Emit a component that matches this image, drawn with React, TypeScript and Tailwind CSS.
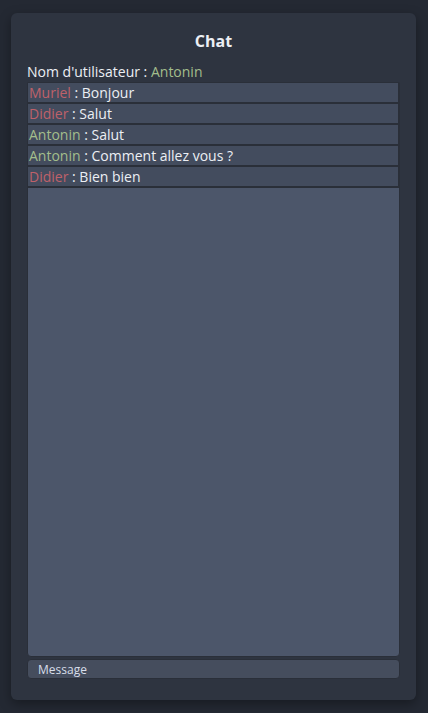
import React from 'react';

interface Message {
  id: number;
  author: string;
  text: string;
}

const currentUser = 'Antonin';

const messages: Message[] = [
  { id: 1, author: 'Muriel', text: 'Bonjour' },
  { id: 2, author: 'Didier', text: 'Salut' },
  { id: 3, author: 'Antonin', text: 'Salut' },
  { id: 4, author: 'Antonin', text: 'Comment allez vous ?' },
  { id: 5, author: 'Didier', text: 'Bien bien' },
];

export default function App() {
  return (
    <div
      className="min-h-screen bg-[#242933] pt-[13px] pl-[11px] pr-[12px]"
      style={{ fontFamily: '"Open Sans", "Noto Sans", sans-serif' }}
    >
      <div className="flex h-[687px] flex-col rounded-md bg-[#2e3440] px-4 pt-4 pb-[21px] shadow-[0_4px_12px_rgba(0,0,0,0.35)]">
        {/* Title */}
        <h1 className="text-center text-base font-bold leading-6 text-[#eceff4]">Chat</h1>

        {/* Current user */}
        <p className="mt-[9px] text-sm leading-5 text-[#eceff4]">
          Nom d'utilisateur : <span className="text-[#a3be8c]">{currentUser}</span>
        </p>

        {/* Messages list */}
        <div className="flex-1 overflow-hidden rounded-b border border-[#2a2f39] bg-[#4c566a]">
          {messages.map((m) => (
            <div
              key={m.id}
              className="h-[21px] border-r border-b-2 border-[#2a2f39] bg-[#434c5e] pl-[1px] text-sm leading-[19px] text-[#eceff4]"
            >
              <span className={m.author === currentUser ? 'text-[#a3be8c]' : 'text-[#bf616a]'}>
                {m.author}
              </span>{' '}
              : {m.text}
            </div>
          ))}
        </div>

        {/* Input */}
        <input
          type="text"
          placeholder="Message"
          className="mt-[2px] h-5 w-full rounded border border-[#2a2f39] bg-[#454d5d] px-[10px] text-xs text-[#eceff4] placeholder:text-[#d8dee9] focus:outline-none"
        />
      </div>
    </div>
  );
}
